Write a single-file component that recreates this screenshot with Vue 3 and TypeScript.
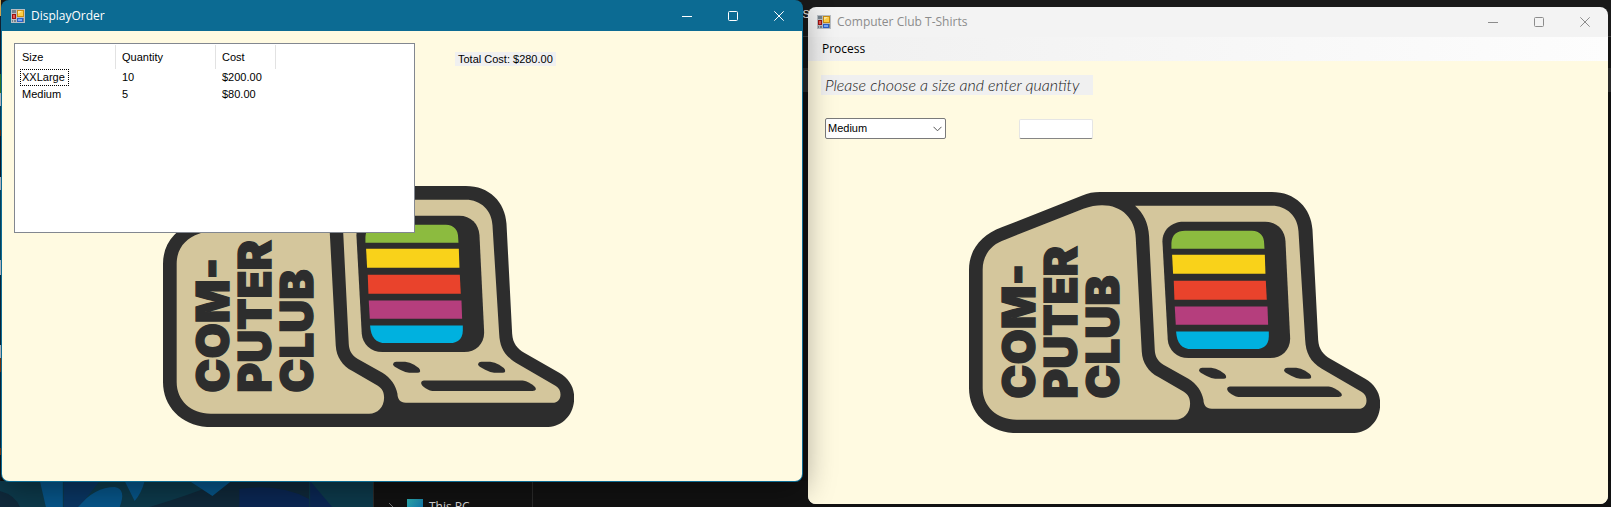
<script setup lang="ts">
import { ref } from 'vue'

interface OrderLine { size: string; quantity: number; cost: string }

const orders: OrderLine[] = [
  { size: 'XXLarge', quantity: 10, cost: '$200.00' },
  { size: 'Medium', quantity: 5, cost: '$80.00' },
]
const sizes = ['Small', 'Medium', 'Large', 'XLarge', 'XXLarge']
const chosen = ref('Medium')
const quantity = ref('')
</script>

<template>
  <svg class="defs" width="0" height="0" aria-hidden="true">
    <symbol id="form-icon" viewBox="0 0 14 14">
      <path d="M0 0H14V14H0Z" fill="#b9bec4" />
      <path d="M1 1H5V4H1ZM1 11H2V13H1ZM3 11H5V13H3ZM12 9H13V13H12Z" fill="#75828c" />
      <rect x="6" y="1" width="7" height="7" fill="#c98d12" />
      <rect x="7" y="2" width="5" height="5" fill="#ffcf45" />
      <path d="M7 2H11L7 5Z" fill="#ffeaa0" />
      <rect x="1" y="5" width="4" height="5" fill="#9c1212" />
      <rect x="2" y="6" width="2" height="3" fill="#e2574e" />
      <rect x="6" y="9" width="6" height="4" fill="#2b5fc4" />
      <rect x="7" y="10" width="4" height="2" fill="#78a8f5" />
    </symbol>
    <symbol id="minimize" viewBox="0 0 10 10"><path d="M0 5.5H10" fill="none" stroke="currentColor" /></symbol>
    <symbol id="maximize" viewBox="0 0 10 10"><rect x=".5" y=".5" width="9" height="9" rx="1" fill="none" stroke="currentColor" /></symbol>
    <symbol id="close" viewBox="0 0 10 10"><path d="M.3 .3 9.7 9.7M9.7 .3 .3 9.7" fill="none" stroke="currentColor" /></symbol>
    <symbol id="club-logo" viewBox="57 37 1233 723">
      <path fill="#2d2d2d" d="M57 270C57 210 95 165 155 143L395 48C415 40 430 37 450 37H965C1035 37 1083 85 1087 150L1104 480C1106 510 1120 525 1140 537L1245 597C1275 615 1290 640 1290 672C1290 722 1255 760 1205 760H200C115 760 57 700 57 625Z" />
      <g fill="#d4c69c">
        <path d="M98 270C98 225 125 193 165 180L400 87C490 55 555 100 557 175L575 515C577 550 595 575 625 592L700 635C715 645 720 655 720 672C720 700 700 720 675 720H200C140 720 98 680 98 625Z" />
        <path d="M555 78H965C1010 78 1043 110 1045 155L1065 480C1067 520 1080 545 1115 567L1235 637C1245 643 1249 652 1249 662C1249 677 1240 687 1225 687H785C768 687 760 675 760 660C755 635 740 612 715 597L640 555C622 543 615 530 614 510L597 170C595 130 580 100 555 78Z" />
      </g>
      <path fill="#2d2d2d" d="M637 185C637 150 665 126 700 126H945C980 126 1004 150 1006 185L1020 475C1021 510 995 535 960 535H715C680 535 655 510 653 480Z" />
      <path fill="#8cbb3f" d="M664 207V190C665 165 680 153 705 153H905C930 153 942 170 942 190L943 207Z" />
      <path fill="#f9d21a" d="M666 225H944L946 282H669Z" />
      <path fill="#e9432c" d="M671 303H947L950 360H673Z" />
      <path fill="#b53e7d" d="M674 380H952L954 435H677Z" />
      <path fill="#00b1df" d="M678 455H956V470C956 495 940 508 918 508H725C695 508 680 490 678 455Z" />
      <g fill="#2d2d2d">
        <path d="M747 572Q747 565 757 564H783Q797 565 810 573L824 583Q829 588 828 593Q827 597 820 597H795Q783 596 768 588L752 579Q748 576 747 572Z" />
        <path d="M1002 572Q1002 565 1012 564H1038Q1052 565 1065 573L1079 583Q1084 588 1083 593Q1082 597 1075 597H1050Q1038 596 1023 588L1007 579Q1003 576 1002 572Z" />
        <path d="M831 628C831 621 836 620 845 620H1135C1145 620 1175 635 1175 645C1175 651 1168 652 1160 652H865C855 652 831 638 831 628Z" />
      </g>
      <g class="logo-text" transform="rotate(-90)">
        <text x="-657" y="255">COM-</text>
        <text x="-657" y="381">PUTER</text>
        <text x="-657" y="507">CLUB</text>
      </g>
    </symbol>
  </svg>

  <div class="desktop">
    <div class="backdrop">
      <div class="code-edge"></div>
      <span class="stray">S</span>
      <div class="explorer">
        <svg class="wallpaper" viewBox="0 0 374 26" preserveAspectRatio="none" aria-hidden="true">
          <path fill="#0d3b4d" d="M0 0H374V26H0Z" />
          <path fill="#102a3c" d="M0 10Q15 14 20 26H0ZM225 0H310V26H150Q190 14 225 0Z" />
          <path fill="#07578c" d="M40 0H63V26H46ZM78 26Q95 6 115 6Q127 8 120 26ZM125 0H145Q142 12 135 20ZM190 0H232L213 15Z" />
          <path fill="#0a3765" d="M64 0H100L84 20 78 26H64Z" />
          <path fill="#0b2856" d="M240 8Q280 2 310 18V26H240ZM311 0 333 26H311Z" />
        </svg>
        <div class="tree">
          <svg width="6" height="10" viewBox="0 0 6 10" aria-hidden="true"><path d="M1 1 5 5 1 9" fill="none" stroke="#777" /></svg>
          <span class="pc-icon"></span>
          <span>This PC</span>
        </div>
      </div>
    </div>

    <section class="window order" aria-label="DisplayOrder">
      <header class="titlebar">
        <svg class="app-icon"><use href="#form-icon" /></svg>
        <h1>DisplayOrder</h1>
        <button aria-label="Minimize"><svg><use href="#minimize" /></svg></button>
        <button aria-label="Maximize"><svg><use href="#maximize" /></svg></button>
        <button aria-label="Close"><svg><use href="#close" /></svg></button>
      </header>
      <main class="client">
        <svg class="logo" viewBox="0 0 1233 723" role="img" aria-label="Computer Club"><use href="#club-logo" width="1233" height="723" /></svg>
        <div class="order-row">
          <div class="list">
            <table>
              <thead>
                <tr><th class="first">Size</th><th class="second">Quantity</th><th class="third">Cost</th><th class="rest"></th></tr>
              </thead>
              <tbody>
                <tr v-for="(line, i) in orders" :key="line.size">
                  <td><span :class="{ focused: i === 0 }">{{ line.size }}</span></td>
                  <td>{{ line.quantity }}</td>
                  <td>{{ line.cost }}</td>
                  <td></td>
                </tr>
              </tbody>
            </table>
          </div>
          <output class="total">Total Cost: $280.00</output>
        </div>
      </main>
    </section>

    <section class="window shirts" aria-label="Computer Club T-Shirts">
      <header class="titlebar">
        <svg class="app-icon"><use href="#form-icon" /></svg>
        <h1>Computer Club T-Shirts</h1>
        <button aria-label="Minimize"><svg><use href="#minimize" /></svg></button>
        <button aria-label="Maximize"><svg><use href="#maximize" /></svg></button>
        <button aria-label="Close"><svg><use href="#close" /></svg></button>
      </header>
      <nav class="menu"><button>Process</button></nav>
      <main class="client">
        <svg class="logo" viewBox="0 0 1233 723" role="img" aria-label="Computer Club"><use href="#club-logo" width="1233" height="723" /></svg>
        <form class="entry" @submit.prevent>
          <p id="prompt">Please choose a size and enter quantity</p>
          <div class="fields">
            <span class="combo">
              <select v-model="chosen" aria-label="Size">
                <option v-for="s in sizes" :key="s">{{ s }}</option>
              </select>
              <svg width="9" height="6" viewBox="0 0 9 6" aria-hidden="true"><path d="M.5 .8 4.5 4.8 8.5 .8" fill="none" stroke="#555" /></svg>
            </span>
            <input v-model="quantity" type="text" aria-labelledby="prompt" />
          </div>
        </form>
      </main>
    </section>
  </div>
</template>

<style>
body { margin: 0; background: #181818; }
</style>

<style scoped>
* { box-sizing: border-box; }
.defs { position: absolute; }
.desktop {
  position: relative;
  display: grid;
  grid-template-columns: 802fr 800fr;
  gap: 5px;
  min-height: 100vh;
  padding: 0 3px 0 1px;
  overflow: hidden;
  background: #181818;
  font: 11px/17px "Liberation Sans", Arial, sans-serif;
  color: #000;
}
.backdrop {
  position: absolute;
  inset: 0;
  background: linear-gradient(#1a1a1a 36px, #3a3a3a 36px 37px, #151515 37px 68px, #2a2a2a 68px 92px, #101010 92px);
}
.code-edge {
  position: absolute;
  inset: 0 auto 0 0;
  width: 1px;
  background: linear-gradient(#e8b95a 16px, #14263a 16px 74px, #3d8b2a 74px 93px, #d9d9e6 93px 106px, #0b4a68 106px 130px, #7a2e0c 130px 136px, #12202f 136px 177px, #d9d9e6 177px 190px, #07506f 190px 260px, #d9d9e6 260px 275px, #0b2c45 275px 345px, #d9d9e6 345px 358px, #8c3a0d 358px 372px, #0b2c45 372px 448px, #8c3a0d 448px 455px, #101820 455px);
}
.stray { position: absolute; left: 50%; top: 6px; margin-left: -3px; color: #eee; }
.explorer {
  position: absolute;
  inset: auto 0 0 0;
  display: grid;
  grid-template-columns: 373fr 160fr 1078fr;
  height: 26px;
  background: #121212;
}
.wallpaper { width: 100%; height: 26px; }
.tree {
  display: flex;
  align-items: flex-start;
  gap: 6px;
  height: 26px;
  padding: 18px 0 0 14px;
  overflow: hidden;
  border: solid #2c2c2c;
  border-width: 0 1px;
  font: 12px/16px "Open Sans", sans-serif;
  color: #ddd;
}
.tree svg { margin: 3px 7px 0 0; }
.pc-icon { width: 16px; height: 14px; background: linear-gradient(135deg, #2fb5b5, #0b6bb0); }

.window {
  position: relative;
  display: flex;
  flex-direction: column;
  border-radius: 8px;
  overflow: hidden;
}
.order { z-index: 2; margin-bottom: 25px; background: #0c6b93; box-shadow: 0 8px 32px rgba(0, 0, 0, .4); }
.shirts { z-index: 1; margin: 7px 0 3px; background: #f3f3f3; }
.titlebar { display: flex; align-items: center; height: 31px; padding: 0 1px 0 10px; }
.shirts .titlebar { height: 30px; color: #8c8c8c; padding: 0 0 0 9px; }
.order .titlebar { color: #fff; }
.app-icon { width: 14px; height: 14px; margin-right: 6px; }
h1 { flex: 1; margin: 0; font: 12px/16px "Open Sans", sans-serif; }
.titlebar button {
  display: grid;
  place-items: center;
  width: 46px;
  height: 100%;
  padding: 0;
  border: 0;
  background: none;
  color: inherit;
}
.titlebar button svg { width: 10px; height: 10px; }
.client { position: relative; flex: 1; background: #fffae1; }
.order .client { margin: 0 1px 1px; padding: 12px; border-radius: 0 0 7px 7px; }
.logo { position: absolute; left: 20.1%; top: 155px; width: 51.4%; height: auto; }
.shirts .logo { top: 131px; }
.logo-text { font: 900 137px Inter, sans-serif; fill: #2d2d2d; stroke: #2d2d2d; stroke-width: 4; }

.order-row { position: relative; display: flex; align-items: flex-start; gap: 40px; }
.list { width: 401px; height: 190px; padding-top: 1px; border: 1px solid #828790; background: #fff; }
table { width: 100%; border-collapse: separate; border-spacing: 0; table-layout: fixed; }
th, td { padding: 0 0 0 6px; font-weight: 400; text-align: left; }
th:first-child, td:first-child { padding-left: 7px; }
th { height: 24px; border-right: 1px solid #e2e2e2; }
td { height: 17px; line-height: 15px; }
.first { width: 101px; }
.second { width: 100px; }
.third { width: 60px; }
.rest { border-right: 0; }
td span { display: inline-block; margin-left: -2px; padding: 0 1px; border: 1px solid transparent; }
td span.focused { padding-right: 3px; border: 1px dotted #000; }
.total { margin-top: 9px; padding: 1px 3px 0; background: #f0f0f0; line-height: 13px; }

.menu { display: flex; height: 24px; padding-left: 8px; background: linear-gradient(90deg, #f0f0f0, #fdfdfd); }
.menu button { padding: 0 6px; border: 0; background: none; font: 12px/24px "Open Sans", sans-serif; color: #000; }
.entry { position: relative; padding: 14px 13px; }
.entry p {
  width: 272px;
  height: 20px;
  margin: 0 0 23px;
  padding-left: 4px;
  background: #f0f0f0;
  font: italic 300 16px/20px "Ink Free", Lato, sans-serif;
  color: #222;
  white-space: nowrap;
}
.fields { display: flex; align-items: flex-end; gap: 73px; padding-left: 4px; }
.combo { display: grid; align-items: center; width: 121px; height: 21px; }
.combo > * { grid-area: 1 / 1; }
.combo svg { justify-self: end; margin-right: 4px; pointer-events: none; }
select {
  width: 100%;
  height: 21px;
  padding: 0 2px;
  appearance: none;
  border: 1px solid #7a7a7a;
  border-radius: 2px;
  background: #fff;
  font: inherit;
  color: #000;
}
input { width: 74px; height: 20px; padding: 0 3px; border: 1px solid #e5e5e5; border-bottom-color: #868686; border-radius: 2px; background: #fff; font: inherit; }
</style>
